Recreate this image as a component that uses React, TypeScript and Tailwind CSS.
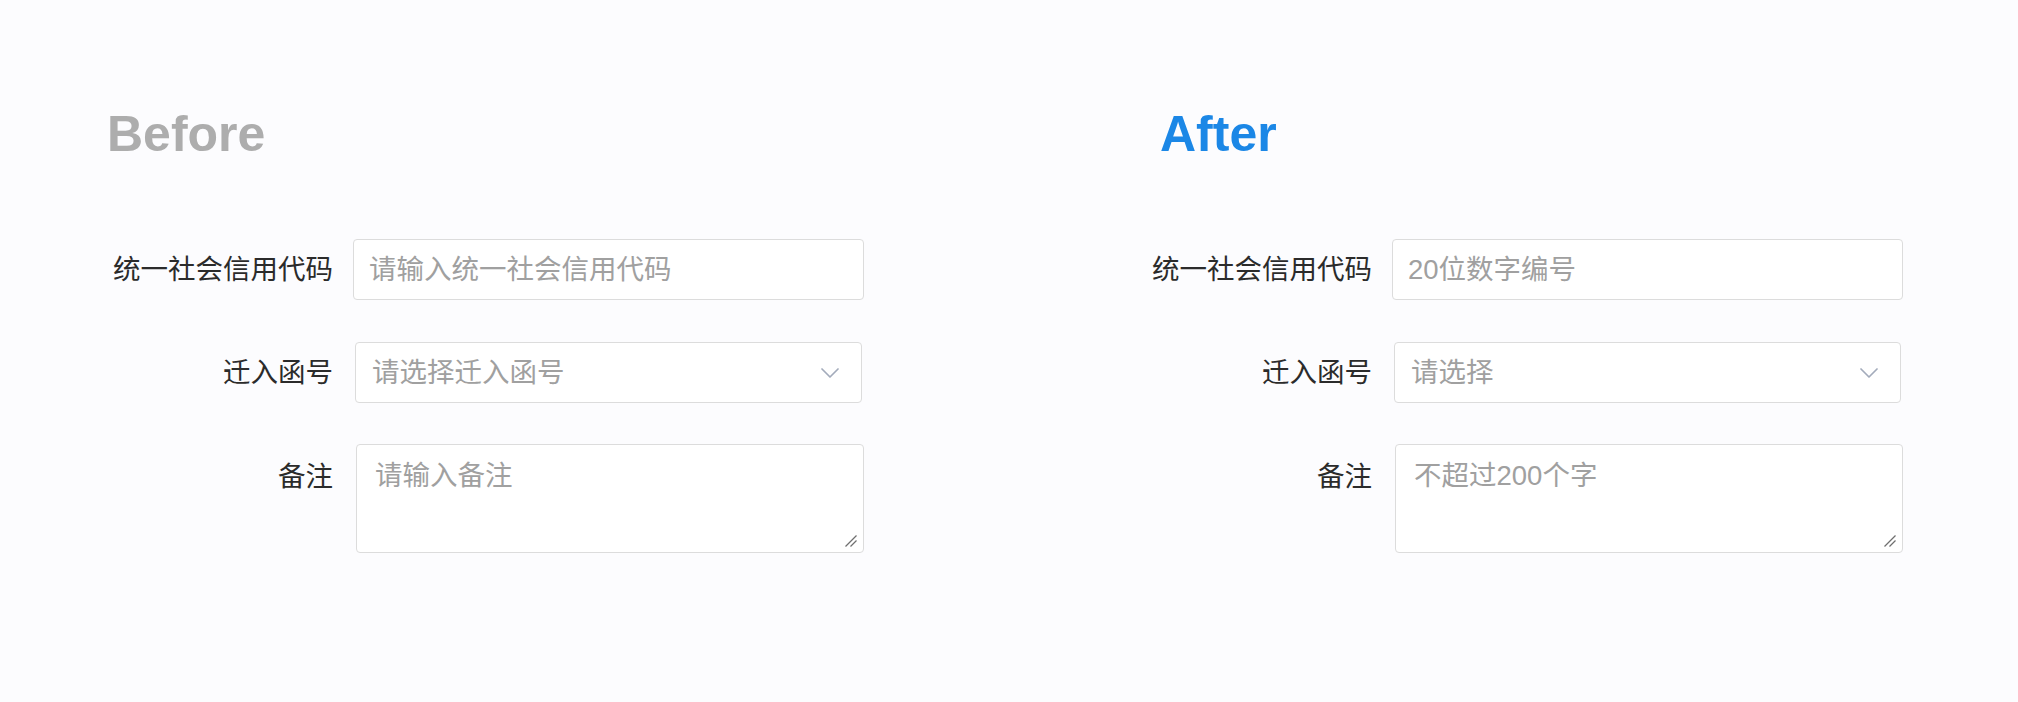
import React from "react";

type Field = {
  codePlaceholder: string;
  selectPlaceholder: string;
  notePlaceholder: string;
};

const labelCls =
  "flex h-[61px] w-[226px] shrink-0 items-center justify-end text-[27.5px] text-[#2b2b2b]";

function FormPanel({ codePlaceholder, selectPlaceholder, notePlaceholder }: Field) {
  return (
    <div className="mt-[80px] flex flex-col">
      {/* 统一社会信用代码 */}
      <div className="flex items-start gap-[20px]">
        <label className={labelCls}>统一社会信用代码</label>
        <input
          placeholder={codePlaceholder}
          className="h-[61px] w-[511px] rounded-[4px] border border-[#dcdcdc] bg-white pl-[15px] text-[27.5px] text-[#333] outline-none placeholder:text-[#a0a0a0]"
        />
      </div>

      {/* 迁入函号 */}
      <div className="mt-[42px] flex items-start gap-[20px]">
        <label className={labelCls}>迁入函号</label>
        <div className="ml-[2px] flex h-[61px] w-[507px] items-center justify-between rounded-[4px] border border-[#dcdcdc] bg-white pl-[16px] pr-[22px]">
          <span className="text-[27.5px] text-[#a0a0a0]">{selectPlaceholder}</span>
          <svg width="18" height="10" viewBox="0 0 18 10" fill="none">
            <polyline
              points="1,1 9,9 17,1"
              stroke="#a3abbb"
              strokeWidth="1.7"
              strokeLinecap="round"
              strokeLinejoin="round"
            />
          </svg>
        </div>
      </div>

      {/* 备注 */}
      <div className="mt-[41px] flex items-start gap-[20px]">
        <label className={labelCls + " mt-[2px]"}>备注</label>
        <div className="relative ml-[3px] h-[109px] w-[508px]">
          <textarea
            placeholder={notePlaceholder}
            className="block h-full w-full resize-none rounded-[4px] border border-[#dcdcdc] bg-white pl-[18px] pt-[13px] text-[27.5px] leading-[36px] text-[#333] outline-none placeholder:text-[#a0a0a0]"
          />
          <svg
            className="pointer-events-none absolute bottom-[6px] right-[7px]"
            width="12"
            height="12"
            viewBox="0 0 12 12"
          >
            <line x1="0.5" y1="11.5" x2="11.5" y2="0.5" stroke="#6f6f6f" strokeWidth="1.2" />
            <line x1="5.5" y1="11.5" x2="11.5" y2="5.5" stroke="#6f6f6f" strokeWidth="1.2" />
          </svg>
        </div>
      </div>
    </div>
  );
}

export default function App() {
  return (
    <div className="flex h-[702px] w-[2018px] bg-[#fcfcfe] pl-[107px] pt-[109px] font-['Liberation_Sans','Noto_Sans_CJK_SC',sans-serif]">
      {/* Before */}
      <div className="w-[1039px] shrink-0">
        <h2 className="h-[50px] text-[50px] font-bold leading-none text-[#adadad]">Before</h2>
        <FormPanel
          codePlaceholder="请输入统一社会信用代码"
          selectPlaceholder="请选择迁入函号"
          notePlaceholder="请输入备注"
        />
      </div>

      {/* After */}
      <div className="shrink-0">
        <h2 className="ml-[14px] h-[50px] text-[50px] font-bold leading-none text-[#1b87e6]">After</h2>
        <FormPanel
          codePlaceholder="20位数字编号"
          selectPlaceholder="请选择"
          notePlaceholder="不超过200个字"
        />
      </div>
    </div>
  );
}
